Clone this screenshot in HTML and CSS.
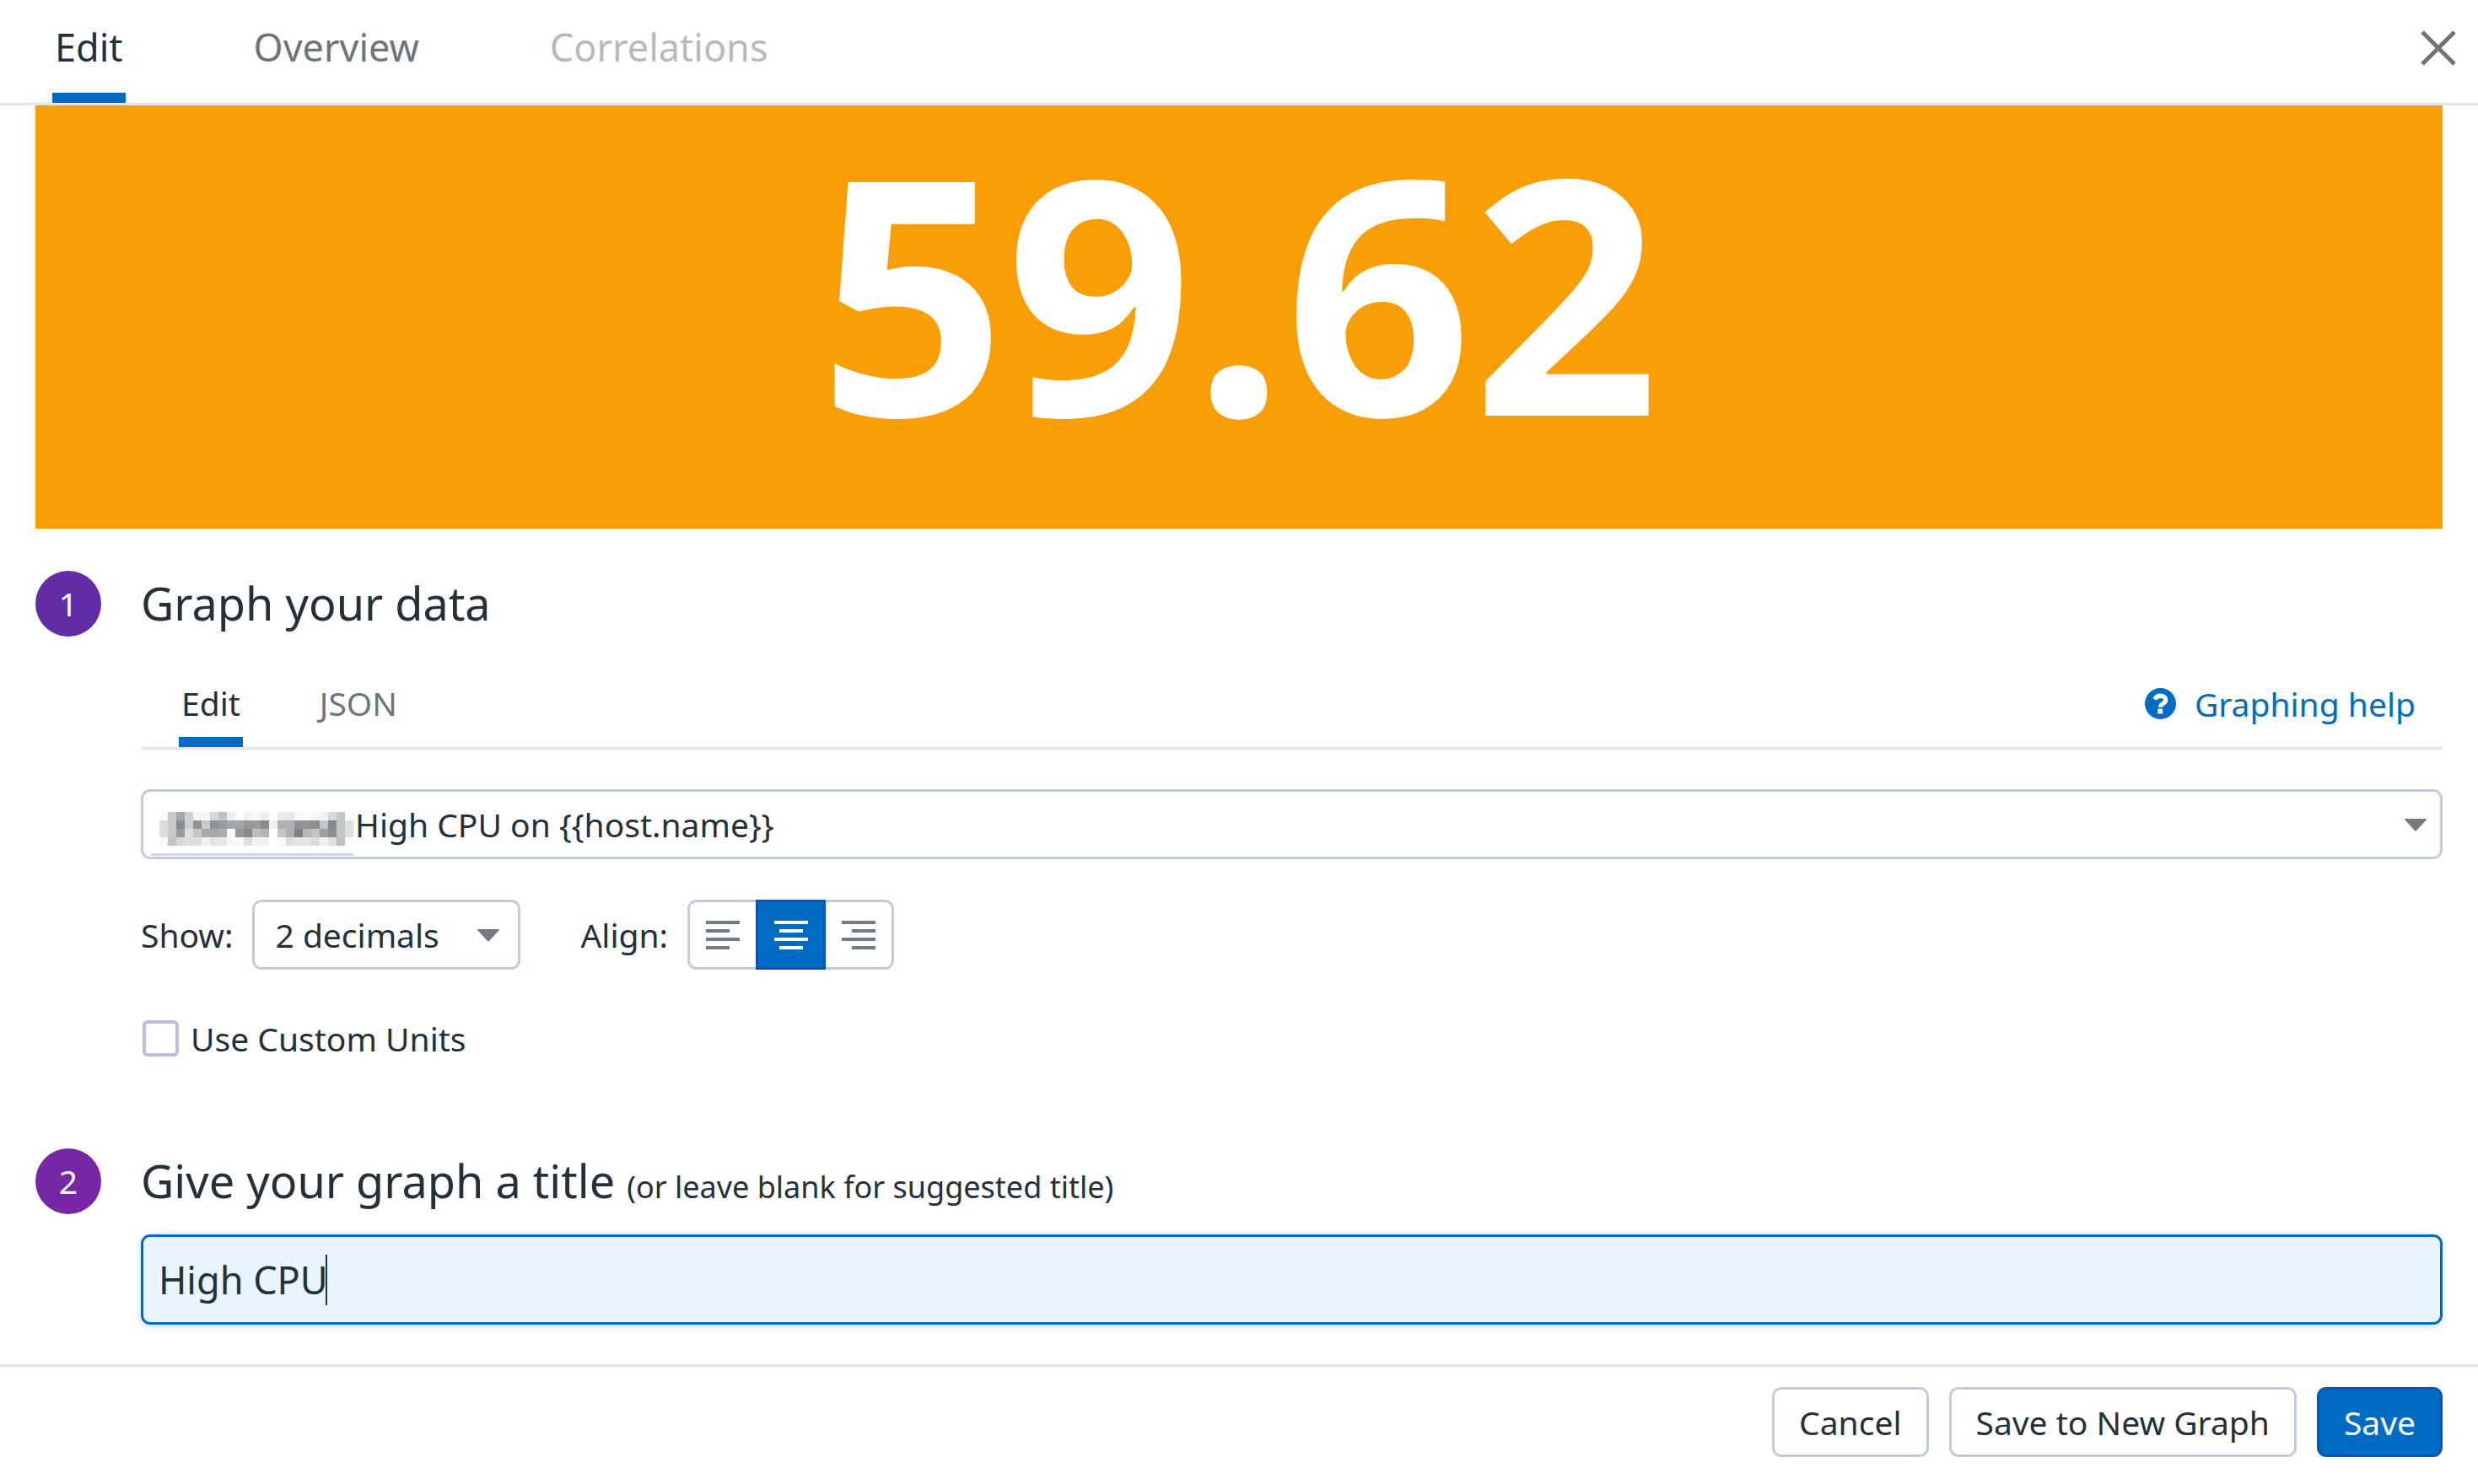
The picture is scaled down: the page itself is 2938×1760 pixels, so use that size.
FILE: index.html
```html
<!DOCTYPE html>
<html lang="en">
<head>
<meta charset="utf-8">
<meta name="viewport" content="width=device-width, initial-scale=1">
<title>Edit graph</title>
<link rel="stylesheet" href="styles.css">
</head>
<body>
<header class="header">
  <nav class="tabs" aria-label="Graph views">
    <button type="button" class="tab tab-active">Edit</button>
    <button type="button" class="tab">Overview</button>
    <button type="button" class="tab" disabled>Correlations</button>
  </nav>
  <button type="button" class="close" aria-label="Close">
    <svg viewBox="0 0 42 42" width="42" height="42" aria-hidden="true"><path d="M2 2 40 40M40 2 2 40" fill="none" stroke="#6c757b" stroke-width="5"/></svg>
  </button>
</header>

<main class="content">
  <div class="preview">59.62</div>

  <section class="step">
    <span class="badge">1</span>
    <div class="step-body">
      <h2 class="step-title">Graph your data</h2>
      <div class="subheader">
        <div class="subtabs">
          <button type="button" class="subtab tab-active">Edit</button>
          <button type="button" class="subtab">JSON</button>
        </div>
        <a class="help" href="#help">
          <svg viewBox="0 0 112 112" width="37" height="37" aria-hidden="true">
            <circle cx="56" cy="56" r="56" fill="#006bc2"/>
            <path d="M36 41C40 31 47 28 56 28C67 28 75 34 75 43C75 56 56 54 56 69" fill="none" stroke="#fff" stroke-width="16"/>
            <rect x="46" y="74" width="18" height="18" rx="3" fill="#fff"/>
          </svg>
          Graphing help
        </a>
      </div>
      <div class="select-wrap monitor">
        <select class="select" aria-label="Monitor"><option>High CPU on {{host.name}}</option></select>
        <svg class="redaction" viewBox="0 0 24 7" width="240" height="70" shape-rendering="crispEdges" aria-hidden="true"></svg>
        <svg class="caret" viewBox="0 0 26 15" width="26" height="15" aria-hidden="true"><path d="M1 0H25Q27 0 25 2L14 14Q13 15 12 14L1 2Q-1 0 1 0Z" fill="#737b82"/></svg>
      </div>
      <div class="options">
        <div class="field">
          <label for="decimals">Show:</label>
          <div class="select-wrap decimals">
            <select class="select" id="decimals"><option>2 decimals</option></select>
            <svg class="caret" viewBox="0 0 26 15" width="26" height="15" aria-hidden="true"><path d="M1 0H25Q27 0 25 2L14 14Q13 15 12 14L1 2Q-1 0 1 0Z" fill="#737b82"/></svg>
          </div>
        </div>
        <div class="field">
          <span id="align-label">Align:</span>
          <div class="align-group" role="group" aria-labelledby="align-label">
            <button type="button" class="align" aria-label="Left"><svg viewBox="0 0 40 34" width="40" height="34"><path d="M0 2H40M0 12H28M0 22H40M0 32H28"/></svg></button>
            <button type="button" class="align align-on" aria-label="Center" aria-pressed="true"><svg viewBox="0 0 40 34" width="40" height="34"><path d="M0 2H40M6 12H34M0 22H40M6 32H34"/></svg></button>
            <button type="button" class="align" aria-label="Right"><svg viewBox="0 0 40 34" width="40" height="34"><path d="M0 2H40M12 12H40M0 22H40M12 32H40"/></svg></button>
          </div>
        </div>
      </div>
      <label class="check"><input type="checkbox" class="checkbox">Use Custom Units</label>
    </div>
  </section>

  <section class="step step-name">
    <span class="badge badge-two">2</span>
    <div class="step-body">
      <h2 class="step-title"><label for="title">Give your graph a title <small class="note">(or leave blank for suggested title)</small></label></h2>
      <div class="title-wrap">
        <input class="title-input" id="title" type="text" value="High CPU">
        <span class="text-cursor"></span>
      </div>
    </div>
  </section>
</main>

<footer class="footer">
  <button type="button" class="button">Cancel</button>
  <button type="button" class="button">Save to New Graph</button>
  <button type="button" class="button button-primary">Save</button>
</footer>
<script src="redaction.js"></script>
</body>
</html>
```
FILE: styles.css
```css
* {
  box-sizing: border-box;
}

body {
  margin: 0;
  min-height: 100vh;
  display: flex;
  flex-direction: column;
  background: #fff;
  color: #22313a;
  font-family: "Noto Sans", sans-serif;
  font-size: 39px;
}

button,
select,
input {
  margin: 0;
  color: inherit;
  font: inherit;
}

.header {
  display: flex;
  justify-content: space-between;
  padding: 0 26px 0 62px;
  border-bottom: 3px solid #e2e5ee;
}

.tabs,
.subtabs {
  display: flex;
}

.tabs {
  gap: 149px;
}

.tab,
.subtab {
  padding: 0 3px;
  border: 0;
  border-bottom: 12px solid transparent;
  background: none;
  color: #6c757b;
}

.tab {
  padding-top: 2px;
  font-size: 45px;
  line-height: 108px;
}

.tab:disabled {
  color: #b6babf;
}

.tab-active {
  border-bottom-color: #006bc2;
  color: #22313a;
}

.close {
  display: flex;
  align-items: center;
  height: 114px;
  padding: 0;
  border: 0;
  background: none;
}

.content {
  flex: 1;
  padding: 0 42px 47px;
}

.preview {
  padding-bottom: 66px;
  background: #fa9e05;
  color: #fff;
  font-size: 388px;
  font-weight: 700;
  line-height: 436px;
  text-align: center;
}

.step {
  display: grid;
  grid-template-columns: 78px 1fr;
  gap: 47px;
  margin-top: 50px;
}

.step-name {
  margin-top: 109px;
}

.badge {
  height: 78px;
  border-radius: 50%;
  background: #632ca6;
  color: #fff;
  line-height: 78px;
  text-align: center;
}

.badge-two {
  background: #7727a5;
}

.step-title {
  margin: 0;
  font-size: 54px;
  font-weight: 400;
  line-height: 76px;
}

.note {
  font-size: 36px;
  line-height: 1;
}

.subheader {
  display: flex;
  justify-content: space-between;
  margin-top: 40px;
  padding: 0 32px 0 45px;
  border-bottom: 3px solid #e2e5ee;
}

.subtabs {
  gap: 88px;
}

.subtab {
  line-height: 81px;
}

.help {
  display: flex;
  align-items: center;
  gap: 22px;
  height: 83px;
  color: #006bc2;
  text-decoration: none;
}

.select-wrap {
  position: relative;
}

.select {
  appearance: none;
  width: 100%;
  height: 83px;
  padding: 0 24px;
  border: 3px solid #c3c9df;
  border-radius: 11px;
  background: #fff;
}

.caret {
  position: absolute;
  top: 35px;
  right: 19px;
  pointer-events: none;
}

.monitor {
  margin-top: 47px;
}

.monitor .select {
  padding-left: 251px;
}

.decimals .caret {
  right: 25px;
}

.redaction {
  position: absolute;
  top: 10px;
  left: 12px;
}

.options {
  display: flex;
  gap: 71px;
  margin-top: 48px;
}

.field {
  display: flex;
  align-items: center;
  gap: 23px;
}

.decimals {
  width: 318px;
}

.align-group {
  display: flex;
  height: 83px;
}

.align {
  display: flex;
  align-items: center;
  justify-content: center;
  width: 81px;
  padding: 0;
  border: 3px solid #c3c9df;
  background: #fff;
  stroke: #737b82;
  stroke-width: 4px;
}

.align:first-child {
  border-right: 0;
  border-radius: 11px 0 0 11px;
}

.align:last-child {
  border-left: 0;
  border-radius: 0 11px 11px 0;
}

.align-on {
  width: 83px;
  border-color: #0a52bf;
  background: #006bc2;
  stroke: #fff;
}

.check {
  display: flex;
  align-items: center;
  gap: 14px;
  width: fit-content;
  height: 44px;
  margin-top: 59px;
  padding-left: 2px;
}

.checkbox {
  appearance: none;
  width: 43px;
  height: 43px;
  border: 4px solid #b9c0dc;
  border-radius: 6px;
  background: #fff;
}

.title-wrap {
  position: relative;
  margin-top: 26px;
}

.title-input {
  display: block;
  width: 100%;
  height: 107px;
  padding: 0 18px;
  border: 3px solid #006bc2;
  border-radius: 11px;
  outline: 0;
  background: #e8f5fe;
  box-shadow: 0 2px 10px #c5dcf0;
  font-size: 45px;
}

.text-cursor {
  position: absolute;
  top: 24px;
  left: 219px;
  width: 2px;
  height: 60px;
  background: #22313a;
}

.footer {
  display: flex;
  justify-content: flex-end;
  gap: 24px;
  padding: 24px 42px 32px;
  border-top: 3px solid #e2e5ee;
}

.button {
  height: 83px;
  padding: 0 29px;
  border: 3px solid #c3c9df;
  border-radius: 11px;
  background: #fff;
}

.button-primary {
  border-color: #0a52bf;
  background: #006bc2;
  color: #fff;
}
```
FILE: redaction.js
```js
// Pixelated stand-in for the hidden part of the monitor name: one grey level per cell.
const rows = [
  "ff ff ff ff ff ff ff fc ff ff ff ff ff ff ff ff ff ff ff ff ff ff ff",
  "fa c9 a7 d0 f5 f5 d8 c1 ed fc f3 f9 ee fc eb e8 f8 fb f6 f2 d8 c7 fa",
  "dc c9 8d d0 94 cb 92 9c a8 a8 9a 9c 8b f0 b2 b2 93 93 90 c6 89 c5 e0",
  "dc c9 9c de c6 a9 a9 b0 f9 98 8b c0 b5 ff c5 b3 80 b8 c4 9f 90 c5 e0",
  "f9 c4 d8 de de f2 e4 e8 f8 f8 df f2 f2 ff fa df e4 e4 dd f0 df c0 fa"
];
const svg = document.querySelector(".redaction");
const cell = (x, y, w, h, fill) => {
  const r = document.createElementNS("http://www.w3.org/2000/svg", "rect");
  Object.entries({ x, y, width: w, height: h, fill }).forEach(([k, v]) => r.setAttribute(k, v));
  svg.append(r);
};
rows.forEach((row, y) => row.split(" ").forEach((hex, x) => {
  const g = parseInt(hex, 16);
  const tint = Math.round((255 - g) / 25);
  cell(x + 1, y + 0.7, 1, 1, `rgb(${g - tint}, ${g}, ${g + tint})`);
}));
cell(0, 6.6, 24, 0.3, "#d6d8d8");
```
